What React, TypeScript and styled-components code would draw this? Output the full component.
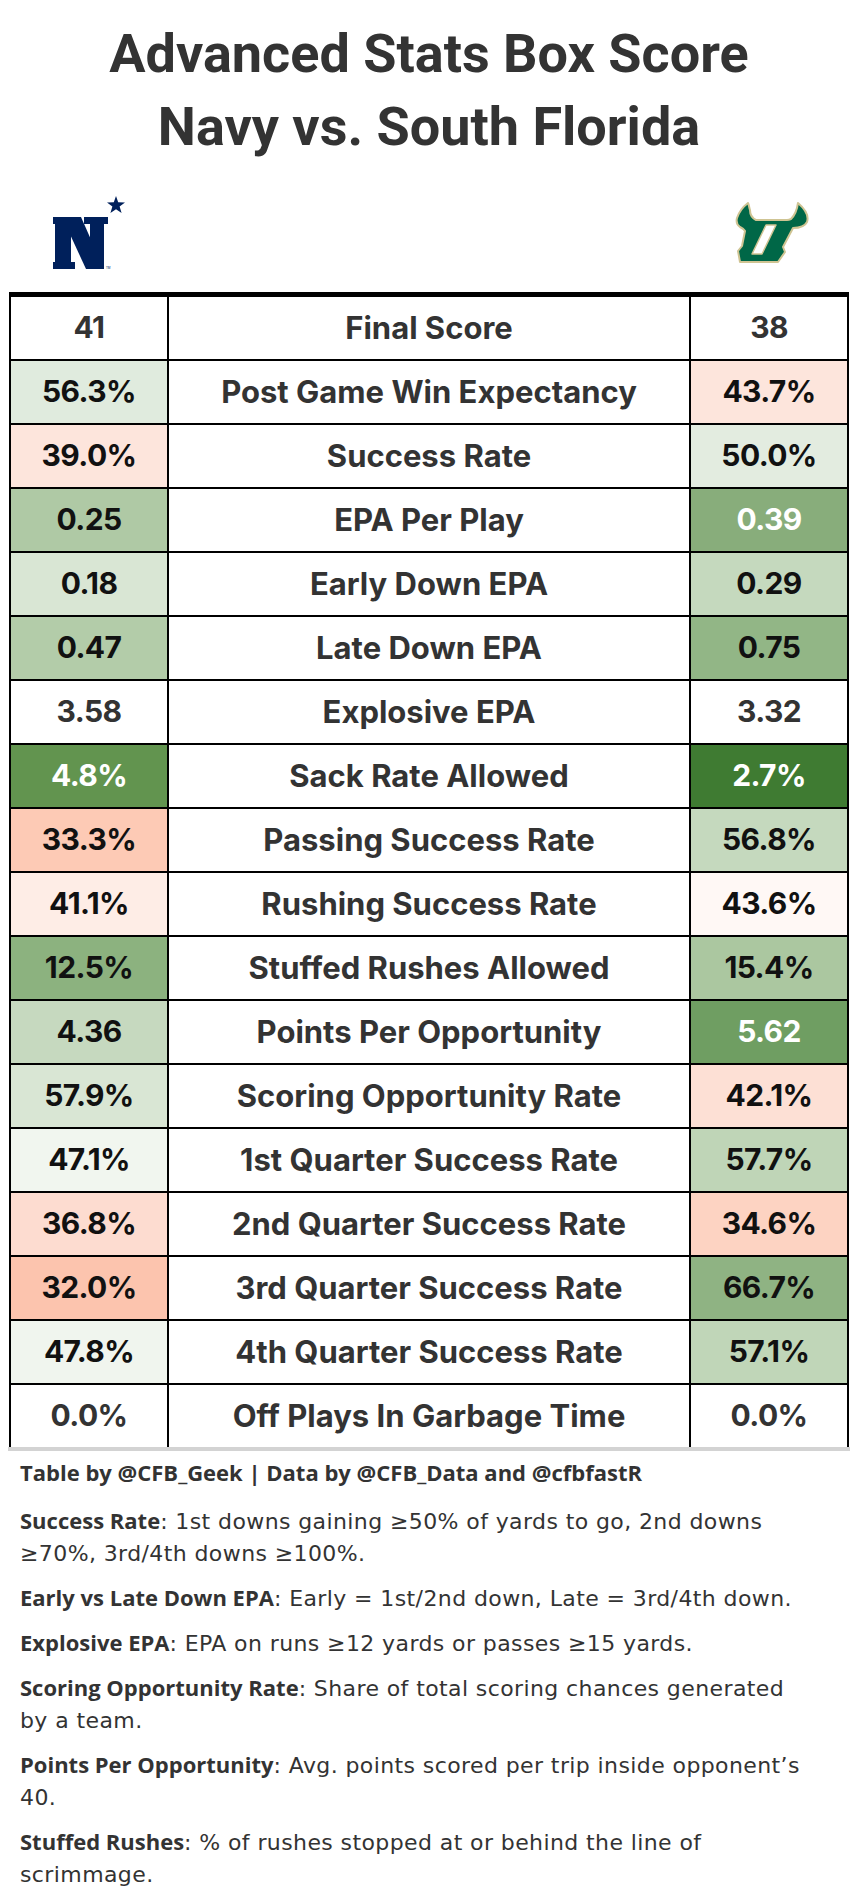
import React from "react";
import styled, { createGlobalStyle } from "styled-components";

const GlobalStyle = createGlobalStyle`
  html, body {
    margin: 0;
    padding: 0;
    background: #ffffff;
  }
  * {
    box-sizing: border-box;
  }
`;

type Row = {
  label: string;
  left: string;
  right: string;
  leftBg: string;
  rightBg: string;
  leftFg?: string;
  rightFg?: string;
};

const INK = "#333333";
const DARK = "#111111";

const rows: Row[] = [
  { label: "Final Score", left: "41", right: "38", leftBg: "#ffffff", rightBg: "#ffffff", leftFg: INK, rightFg: INK },
  { label: "Post Game Win Expectancy", left: "56.3%", right: "43.7%", leftBg: "#e0ebde", rightBg: "#fde5dc" },
  { label: "Success Rate", left: "39.0%", right: "50.0%", leftBg: "#fde5dc", rightBg: "#e3ece0" },
  { label: "EPA Per Play", left: "0.25", right: "0.39", leftBg: "#afc9a5", rightBg: "#88ad7b", rightFg: "#ffffff" },
  { label: "Early Down EPA", left: "0.18", right: "0.29", leftBg: "#d9e6d4", rightBg: "#c5d9be" },
  { label: "Late Down EPA", left: "0.47", right: "0.75", leftBg: "#b3cca9", rightBg: "#92b686" },
  { label: "Explosive EPA", left: "3.58", right: "3.32", leftBg: "#ffffff", rightBg: "#ffffff", leftFg: INK, rightFg: INK },
  { label: "Sack Rate Allowed", left: "4.8%", right: "2.7%", leftBg: "#62944f", rightBg: "#3f7b32", leftFg: "#ffffff", rightFg: "#ffffff" },
  { label: "Passing Success Rate", left: "33.3%", right: "56.8%", leftBg: "#fdcab5", rightBg: "#c5d9be" },
  { label: "Rushing Success Rate", left: "41.1%", right: "43.6%", leftBg: "#feede6", rightBg: "#fff8f5" },
  { label: "Stuffed Rushes Allowed", left: "12.5%", right: "15.4%", leftBg: "#8cb27f", rightBg: "#abc7a0" },
  { label: "Points Per Opportunity", left: "4.36", right: "5.62", leftBg: "#c6d9bf", rightBg: "#6f9e62", rightFg: "#ffffff" },
  { label: "Scoring Opportunity Rate", left: "57.9%", right: "42.1%", leftBg: "#d9e6d4", rightBg: "#fde0d5" },
  { label: "1st Quarter Success Rate", left: "47.1%", right: "57.7%", leftBg: "#f1f6ef", rightBg: "#bfd5b7" },
  { label: "2nd Quarter Success Rate", left: "36.8%", right: "34.6%", leftBg: "#fddcd0", rightBg: "#fdd3c2" },
  { label: "3rd Quarter Success Rate", left: "32.0%", right: "66.7%", leftBg: "#fcc4ae", rightBg: "#8fb383" },
  { label: "4th Quarter Success Rate", left: "47.8%", right: "57.1%", leftBg: "#f0f5ee", rightBg: "#c0d6b8" },
  { label: "Off Plays In Garbage Time", left: "0.0%", right: "0.0%", leftBg: "#ffffff", rightBg: "#ffffff", leftFg: INK, rightFg: INK },
];

const notes: { term: string; text: string }[] = [
  { term: "Success Rate", text: ": 1st downs gaining ≥50% of yards to go, 2nd downs ≥70%, 3rd/4th downs ≥100%." },
  { term: "Early vs Late Down EPA", text: ": Early = 1st/2nd down, Late = 3rd/4th down." },
  { term: "Explosive EPA", text: ": EPA on runs ≥12 yards or passes ≥15 yards." },
  { term: "Scoring Opportunity Rate", text: ": Share of total scoring chances generated by a team." },
  { term: "Points Per Opportunity", text: ": Avg. points scored per trip inside opponent’s 40." },
  { term: "Stuffed Rushes", text: ": % of rushes stopped at or behind the line of scrimmage." },
];

const Page = styled.div`
  width: 858px;
  min-height: 1898px;
  background: #ffffff;
  font-family: Roboto, "Liberation Sans", sans-serif;
  color: ${INK};
`;

const Title = styled.h1`
  margin: 0;
  padding-top: 17px;
  text-align: center;
  font-family: Roboto, "Liberation Sans", sans-serif;
  font-size: 54px;
  font-weight: 700;
  line-height: 73px;
  color: ${INK};
`;

const LogoRow = styled.div`
  height: 129px;
  padding: 10px 45px 0 53px;
  display: flex;
  align-items: center;
  justify-content: space-between;
`;

const Table = styled.div`
  margin: 0 9px;
  border-top: 5px solid #000;
  border-left: 2px solid #000;
  border-right: 2px solid #000;
`;

const TableRow = styled.div<{ $last?: boolean }>`
  display: grid;
  grid-template-columns: 158px 522px 156px;
  height: ${(p) => (p.$last ? "62px" : "64px")};
  border-bottom: ${(p) => (p.$last ? "none" : "2px solid #000")};
`;

const Cell = styled.div<{ $bg?: string; $fg?: string; $divider?: boolean }>`
  display: flex;
  align-items: center;
  justify-content: center;
  background: ${(p) => p.$bg || "#ffffff"};
  color: ${(p) => p.$fg || DARK};
  border-right: ${(p) => (p.$divider ? "2px solid #000" : "none")};
  font-family: Inter, "Open Sans", sans-serif;
  font-size: 30px;
  font-weight: 700;
  letter-spacing: -0.6px;
  padding-bottom: 2px;
`;

const Label = styled(Cell)`
  color: ${INK};
  font-size: 31px;
  letter-spacing: 0;
`;

const BottomRule = styled.div`
  margin: 0 8px;
  height: 4px;
  background: #d3d3d3;
`;

const Notes = styled.div`
  padding: 5px 0 0 20px;
  width: 812px;
  font-family: "DejaVu Sans", "Open Sans", sans-serif;
  font-size: 22px;
  letter-spacing: 0.4px;
  line-height: 32px;
  color: ${INK};
`;

const Note = styled.p`
  margin: 0 0 11px 0;
  b {
    font-family: "Open Sans", Roboto, sans-serif;
    font-size: 22px;
    font-weight: 700;
    letter-spacing: 0;
  }
`;

const Source = styled(Note)`
  font-family: "Open Sans", Roboto, sans-serif;
  font-weight: 700;
  letter-spacing: 0;
  margin-bottom: 16px;
`;

const NavyLogo = () => (
  <svg width="72" height="73" viewBox="0 0 72 73">
    <g fill="#00205b">
      <polygon points="63,0 65.2,6.3 72,6.5 66.6,10.6 68.6,17 63,13.2 57.4,17 59.4,10.6 54,6.5 60.8,6.3" />
      <rect x="0" y="21" width="22" height="7" />
      <rect x="2" y="21" width="16" height="52" />
      <rect x="0" y="66" width="22" height="7" />
      <polygon points="9,21 28,21 51,73 33,73" />
      <rect x="31" y="21" width="24" height="7" />
      <rect x="37" y="21" width="14" height="52" />
    </g>
    <text x="53" y="73" fontSize="3" fill="#00205b" fontFamily="Roboto, sans-serif">TM</text>
  </svg>
);

const BullLogo = () => (
  <svg width="80" height="64" viewBox="0 0 80 64">
    <path
      d="M15 2 C 11 5, 6 11, 4 17 C 3 21, 4 24, 7 26 C 9 27, 11 28, 12 30 L 9 45 L 5 50 L 7 61 L 45 61 L 52 51 L 50 46 L 60 27 C 66 27, 72 25, 74 21 C 76 15, 72 8, 65 2 C 64 9, 62 14, 58 18 C 56 19, 55 19, 54 19 L 23 19 C 19 17, 17 13, 17 9 C 16 6, 16 4, 15 2 Z"
      fill="#006747"
      stroke="#cfc493"
      strokeWidth="2"
      strokeLinejoin="round"
    />
    <polygon points="33,24 43,24 29,53 19,53" fill="#ffffff" stroke="#cfc493" strokeWidth="1.5" strokeLinejoin="round" />
  </svg>
);

export default function App() {
  return (
    <Page>
      <GlobalStyle />
      <Title>
        Advanced Stats Box Score
        <br />
        Navy vs. South Florida
      </Title>
      <LogoRow>
        <NavyLogo />
        <BullLogo />
      </LogoRow>
      <Table>
        {rows.map((r, i) => (
          <TableRow key={r.label} $last={i === rows.length - 1}>
            <Cell $bg={r.leftBg} $fg={r.leftFg} $divider>
              {r.left}
            </Cell>
            <Label $divider>{r.label}</Label>
            <Cell $bg={r.rightBg} $fg={r.rightFg}>
              {r.right}
            </Cell>
          </TableRow>
        ))}
      </Table>
      <BottomRule />
      <Notes>
        <Source>Table by @CFB_Geek | Data by @CFB_Data and @cfbfastR</Source>
        {notes.map((n) => (
          <Note key={n.term}>
            <b>{n.term}</b>
            {n.text}
          </Note>
        ))}
      </Notes>
    </Page>
  );
}
